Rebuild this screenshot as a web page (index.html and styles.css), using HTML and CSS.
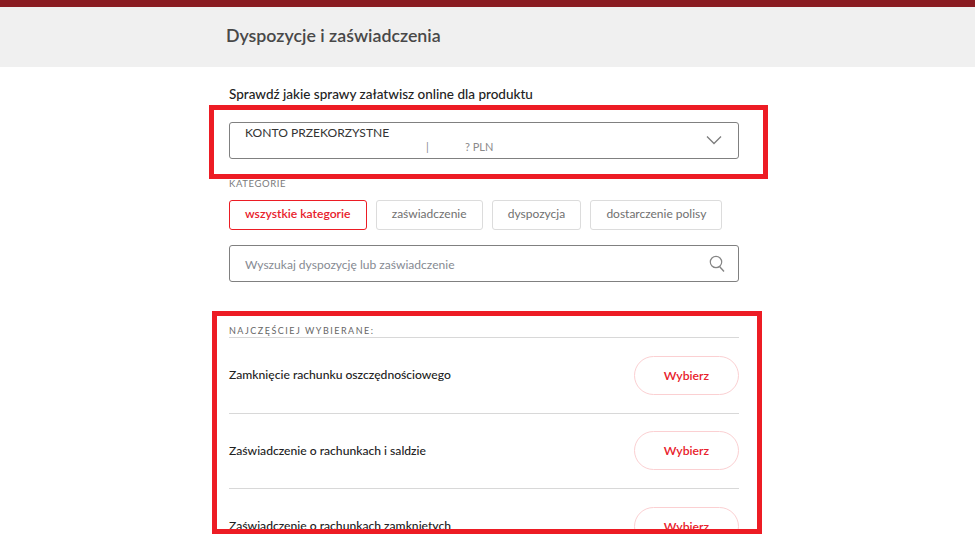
FILE: index.html
```html
<!DOCTYPE html>
<html lang="pl">
<head>
<meta charset="utf-8">
<title>Dyspozycje i zaświadczenia</title>
<link rel="stylesheet" href="styles.css">
</head>
<body>
<div class="topbar"></div>
<header class="band"><h1 class="title">Dyspozycje i zaświadczenia</h1></header>
<main class="content">
  <h2 class="lead">Sprawdź jakie sprawy załatwisz online dla produktu</h2>
  <div class="select">
    <div class="select-name">KONTO PRZEKORZYSTNE</div>
    <div class="select-sub"><span class="sub-bar">|</span><span class="sub-amount">? PLN</span></div>
    <svg class="chev" width="16" height="10" viewBox="0 0 16 10"><path d="M1 1.5 L8 8.5 L15 1.5" fill="none" stroke="#7d7d7d" stroke-width="1.3"/></svg>
  </div>
  <div class="cat-label">KATEGORIE</div>
  <div class="chips">
    <span class="chip chip-active">wszystkie kategorie</span>
    <span class="chip">zaświadczenie</span>
    <span class="chip">dyspozycja</span>
    <span class="chip">dostarczenie polisy</span>
  </div>
  <div class="search">
    <span class="placeholder">Wyszukaj dyspozycję lub zaświadczenie</span>
    <svg class="loupe" width="16" height="18" viewBox="0 0 16 18"><circle cx="7" cy="7" r="5.7" fill="none" stroke="#858585" stroke-width="1.2"/><path d="M10.5 11.5 L15 16.5" fill="none" stroke="#858585" stroke-width="1.4"/></svg>
  </div>
  <div class="list-label">NAJCZĘŚCIEJ WYBIERANE:</div>
  <ul class="list">
    <li class="row"><span class="row-text">Zamknięcie rachunku oszczędnościowego</span><span class="pill">Wybierz</span></li>
    <li class="row"><span class="row-text">Zaświadczenie o rachunkach i saldzie</span><span class="pill">Wybierz</span></li>
    <li class="row"><span class="row-text">Zaświadczenie o rachunkach zamkniętych</span><span class="pill">Wybierz</span></li>
  </ul>
</main>
<div class="mark mark-select"></div>
<div class="mark mark-list"></div>
</body>
</html>
```
FILE: styles.css
```css
* { box-sizing: border-box; }
html, body { margin: 0; padding: 0; height: 534px; overflow: hidden; background: #fff; }
body { font-family: Lato, "Open Sans", sans-serif; position: relative; }
.topbar { height: 7px; background: #8a1c22; }
.band { height: 60px; background: #f0f0f0; padding-left: 226px; display: flex; align-items: center; }
.title { margin: 0; font-size: 17.8px; font-weight: 600; color: #484848; line-height: 24px; position: relative; top: -2px; }
.content { width: 510px; margin-left: 229px; }
.lead { margin: 18px 0 0; font-size: 13.5px; font-weight: 500; line-height: 18px; color: #222; }
.select { margin-top: 19px; height: 37px; border: 1px solid #808080; border-radius: 3px; position: relative; padding: 2px 15px 0; }
.select-name { font-size: 12.1px; line-height: 16px; color: #333; }
.select-sub { font-size: 11px; line-height: 14px; color: #8a8a8a; margin-top: -1px; padding-left: 181px; display: flex; }
.sub-bar { width: 39px; }
.chev { position: absolute; right: 16px; top: 12px; }
.cat-label { margin-top: 19px; font-size: 9.5px; line-height: 12px; letter-spacing: .6px; color: #7a7a7a; }
.chips { margin-top: 10px; display: flex; gap: 9.2px; height: 30px; }
.chip { height: 30px; padding: 0 15px; border: 1px solid #dcdcdc; border-radius: 3px; font-size: 12px; line-height: 26px; color: #707070; }
.chip-active { border-color: #ec1c24; color: #e8212b; font-weight: 600; font-size: 12.15px; }
.search { margin-top: 15px; height: 37px; border: 1px solid #808080; border-radius: 3px; padding: 0 15px; display: flex; align-items: center; justify-content: space-between; }
.placeholder { font-size: 12.05px; color: #868a92; margin-top: 2px; }
.loupe { margin-right: -2px; }
.list-label { margin-top: 43px; font-size: 9px; line-height: 12px; letter-spacing: 1.5px; color: #666; padding-bottom: 0; border-bottom: 1px solid #d8d8d8; }
.list { margin: 0; padding: 0; list-style: none; }
.row { height: 75.5px; display: flex; align-items: center; justify-content: space-between; border-bottom: 1px solid #d8d8d8; }
.row-text { font-size: 12.12px; font-weight: 500; color: #222; margin-bottom: 1px; }
.pill { width: 105px; height: 39px; border: 1px solid #fbd0d2; border-radius: 20px; display: flex; align-items: center; justify-content: center; font-size: 12.2px; font-weight: 600; color: #e8212b; }
.mark { position: absolute; border: 5px solid #ed1c24; }
.mark-select { left: 209px; top: 105px; width: 559px; height: 74px; }
.mark-list { left: 212px; top: 311px; width: 550px; height: 223px; }
```
